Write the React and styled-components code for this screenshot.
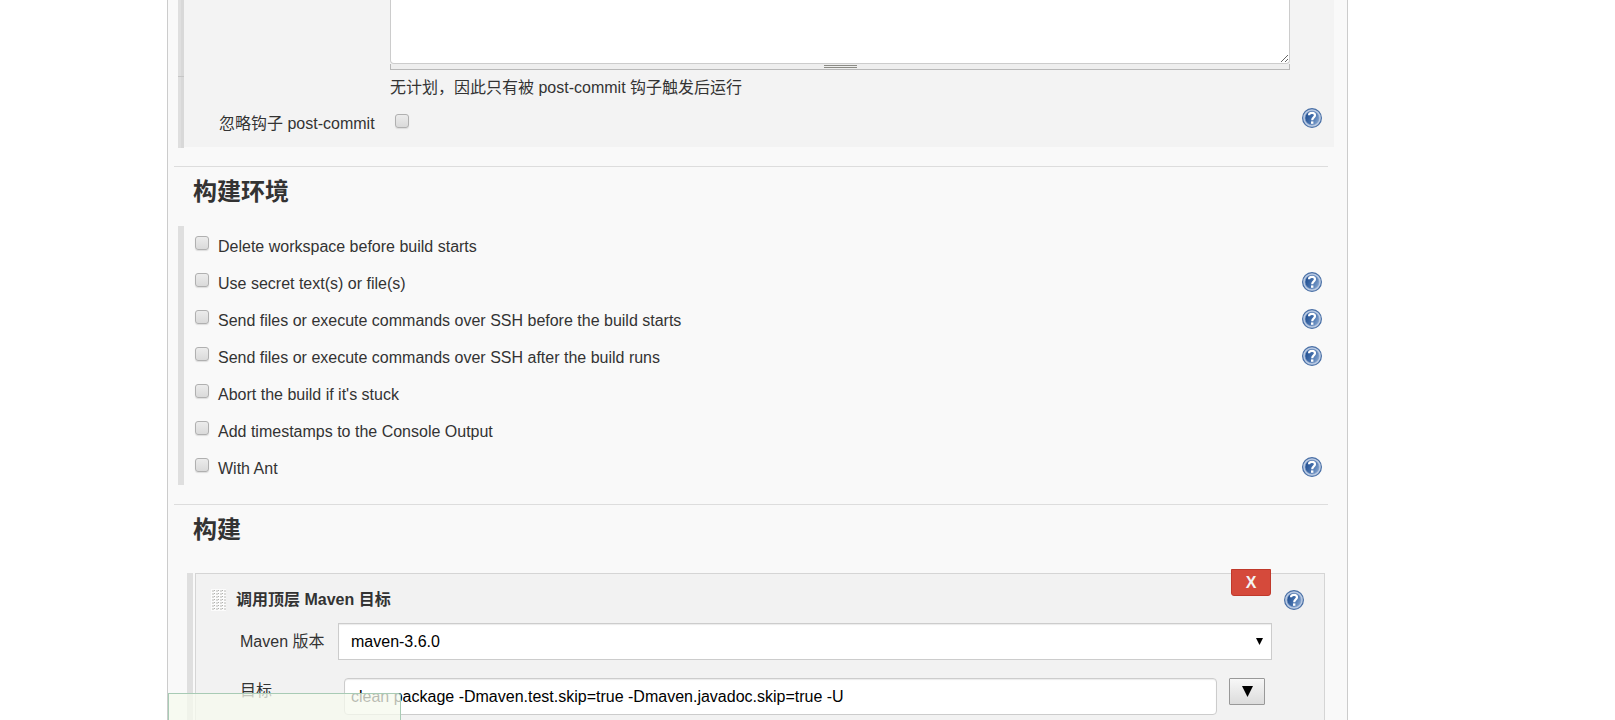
import React from "react";
import styled, { createGlobalStyle } from "styled-components";

const Global = createGlobalStyle`
  * { box-sizing: border-box; }
  body {
    margin: 0;
    background: #fff;
    color: #333;
    font: 16px/20px "Liberation Sans", "Noto Sans CJK SC", sans-serif;
  }
  input, select, textarea, button { font: inherit; margin: 0; }
`;

const Viewport = styled.div`
  height: 100vh;
  overflow: hidden;
`;

const Panel = styled.main`
  min-height: 100%;
  margin: 0 267px 0 167px;
  border: solid #ccc;
  border-width: 0 1px;
  background: #f9f9f9;
`;

const TriggerSection = styled.section`
  display: flex;
  margin: 0 13px 18px 10px;
`;

const NestedBar = styled.div`
  width: 6px;
  flex: none;
  display: flex;
  flex-direction: column;
  background: linear-gradient(to right, #dfdfdf 50%, #d8d8d8 50%);
`;

const BarSegment = styled.div`
  height: 76px;
  & + & {
    flex: 1;
    height: auto;
    border-top: 1px solid #c6c6c6;
  }
`;

const TriggerBody = styled.div`
  flex: 1;
  min-width: 0;
  margin-bottom: 1px;
  background: #f3f3f3;
`;

const Schedule = styled.div`
  margin: 0 44px 0 206px;
`;

const ScheduleText = styled.textarea`
  display: block;
  width: 100%;
  height: 64px;
  border: 1px solid #ccc;
  border-top: 0;
  border-radius: 0 0 4px 4px;
  background: #fff;
  resize: vertical;
  outline: none;
`;

const ResizeHandle = styled.div`
  height: 6px;
  display: flex;
  justify-content: center;
  border: solid #b8b8b8;
  border-width: 0 1px 1px;
  background: #eee;
  padding-top: 1px;
`;

const Grip = styled.span`
  width: 33px;
  height: 3px;
  border: solid #8b8b85;
  border-width: 1px 0;
`;

const Hint = styled.p`
  margin: 8px 0 0;
`;

const HookRow = styled.div`
  display: flex;
  height: 49px;
  padding: 10px 12px 0 35px;
`;

const HookLabel = styled.label`
  width: 176px;
  padding-top: 6px;
`;

const Checkbox = styled.input.attrs({ type: "checkbox" })`
  appearance: none;
  flex: none;
  width: 14px;
  height: 14px;
  border: 1px solid #b0b0b0;
  border-radius: 3px;
  background: linear-gradient(#ececec, #dadada);
  box-shadow: 0 1px 1px #ddd;
  ${HookRow} & { margin-top: 6px; }
`;

const HelpLink = styled.a`
  display: block;
  width: 20px;
  height: 20px;
  margin-left: auto;
  flex: none;
  svg { display: block; }
`;

const Divider = styled.hr`
  margin: 0 19px 0 6px;
  border: 0;
  border-top: 1px solid #ddd;
`;

const Heading = styled.h2`
  margin: 0;
  padding: 9px 0 0 25px;
  font-size: 24px;
  line-height: 32px;
  font-weight: bold;
`;

const OptionList = styled.ul`
  list-style: none;
  margin: 18px 13px 19px 10px;
  padding: 0;
  border-left: 6px solid #dfdfdf;
`;

const Option = styled.li`
  display: flex;
  height: 37px;
  padding: 9px 12px 0 11px;
`;

const OptionLabel = styled.label`
  display: flex;
  gap: 9px;
  input { margin-top: 1px; }
  span { padding-top: 1px; line-height: 22px; }
`;

const Builder = styled.section`
  margin: 27px 22px 0 19px;
  padding-left: 2px;
  border-left: 6px solid #dfdfdf;
`;

const Step = styled.div`
  position: relative;
  min-height: 200px;
  border: 1px solid #d5d5d5;
  background: #f2f2f2;
`;

const StepHeader = styled.header`
  display: flex;
  align-items: center;
  height: 49px;
  padding: 3px 20px 0 15px;
`;

const StepTitle = styled.h3`
  margin: 0 0 0 10px;
  font-size: 16px;
  line-height: 20px;
`;

const DeleteButton = styled.button`
  position: absolute;
  top: -5px;
  right: 53px;
  width: 40px;
  height: 27px;
  padding: 0;
  border: 1px solid #c0392b;
  border-radius: 0 0 3px 3px;
  background: #d54a3b;
  color: #f3f3f3;
  font-weight: bold;
`;

const Field = styled.div`
  display: flex;
  align-items: ${(p) => (p.$top ? "flex-start" : "center")};
  padding: 0 52px 0 44px;
  margin-bottom: 18px;
`;

const FieldLabel = styled.label`
  width: 98px;
  flex: none;
  line-height: 26px;
`;

const SelectWrap = styled.div`
  position: relative;
  flex: 1;
  svg { position: absolute; right: 9px; top: 15px; pointer-events: none; }
`;

const Select = styled.select`
  appearance: none;
  display: block;
  width: 100%;
  height: 37px;
  padding: 1px 12px 0;
  border: 1px solid #ccc;
  border-radius: 0;
  background: #fff;
  color: #000;
  box-shadow: inset 0 1px 1px rgba(0, 0, 0, 0.08);
`;

const TextInput = styled.input`
  flex: 1;
  min-width: 0;
  height: 37px;
  margin-left: 6px;
  padding: 0 6px;
  border: 1px solid #ccc;
  border-radius: 4px;
  background: #fff;
  color: #000;
  box-shadow: inset 0 1px 1px rgba(0, 0, 0, 0.08);
`;

const ExpandButton = styled.button`
  display: grid;
  place-items: center;
  width: 36px;
  height: 27px;
  margin: 0 7px 0 12px;
  padding: 0;
  border: 1px solid #999;
  border-radius: 1px;
  background: linear-gradient(#f7f7f7, #dcdcdc);
`;

const SaveBar = styled.div`
  position: sticky;
  bottom: 0;
  width: 233px;
  height: 27px;
  border: 1px solid #a8cbb5;
  border-bottom: 0;
  border-top-right-radius: 3px;
  background: rgba(245, 249, 238, 0.75);
`;

function Triangle({ width, height }) {
  return (
    <svg width={width} height={height} viewBox="0 0 10 10" preserveAspectRatio="none" aria-hidden="true">
      <path d="M0 0H10L5 10Z" fill="#000" />
    </svg>
  );
}

function Help() {
  return (
    <HelpLink href="#help" aria-label="Help">
      <svg width="20" height="20" viewBox="0 0 20 20" aria-hidden="true">
        <defs>
          <linearGradient id="help-fill" x1="0" y1="0.3" x2="1" y2="0.8">
            <stop offset="0" stopColor="#1f4d8f" />
            <stop offset="0.5" stopColor="#4570ac" />
            <stop offset="1" stopColor="#86a6d0" />
          </linearGradient>
        </defs>
        <circle cx="10" cy="10" r="9.4" fill="#bccce4" stroke="#4a70a6" strokeWidth="1.2" />
        <circle cx="10" cy="10" r="7" fill="url(#help-fill)" stroke="#7d9cc8" strokeWidth="0.6" />
        <path d="M7 7.2C7.2 4.2 13 4.2 13 7.3C13 9.5 10.2 9.2 10.2 12.2" fill="none" stroke="#fff" strokeWidth="2.2" />
        <rect x="9" y="13.4" width="2.4" height="2.4" fill="#fff" />
      </svg>
    </HelpLink>
  );
}

function DragHandle() {
  return (
    <svg width="15" height="22" aria-hidden="true">
      <defs>
        <pattern id="drag-dots" width="4" height="3" patternUnits="userSpaceOnUse">
          <rect width="4" height="3" fill="#fcfcfc" />
          <rect x="1" y="1" width="3" height="1" fill="#dcdcda" />
          <rect x="1" y="2" width="2" height="1" fill="#d8d8d6" />
          <rect x="3" y="1" width="1" height="1" fill="#b0b0ae" />
        </pattern>
      </defs>
      <rect width="15" height="22" fill="url(#drag-dots)" />
    </svg>
  );
}

const options = [
  { text: "Delete workspace before build starts" },
  { text: "Use secret text(s) or file(s)", help: true },
  { text: "Send files or execute commands over SSH before the build starts", help: true },
  { text: "Send files or execute commands over SSH after the build runs", help: true },
  { text: "Abort the build if it's stuck" },
  { text: "Add timestamps to the Console Output" },
  { text: "With Ant", help: true },
];

export default function App() {
  return (
    <Viewport>
      <Global />
      <Panel>
        <TriggerSection>
          <NestedBar>
            <BarSegment />
            <BarSegment />
          </NestedBar>
          <TriggerBody>
            <Schedule>
              <ScheduleText aria-label="Schedule" />
              <ResizeHandle>
                <Grip />
              </ResizeHandle>
              <Hint>无计划，因此只有被 post-commit 钩子触发后运行</Hint>
            </Schedule>
            <HookRow>
              <HookLabel htmlFor="ignore-hook">忽略钩子 post-commit</HookLabel>
              <Checkbox id="ignore-hook" />
              <Help />
            </HookRow>
          </TriggerBody>
        </TriggerSection>

        <Divider />
        <Heading>构建环境</Heading>
        <OptionList>
          {options.map((o) => (
            <Option key={o.text}>
              <OptionLabel>
                <Checkbox />
                <span>{o.text}</span>
              </OptionLabel>
              {o.help && <Help />}
            </Option>
          ))}
        </OptionList>

        <Divider />
        <Heading>构建</Heading>
        <Builder>
          <Step>
            <StepHeader>
              <DragHandle />
              <StepTitle>调用顶层 Maven 目标</StepTitle>
              <Help />
            </StepHeader>
            <DeleteButton type="button">X</DeleteButton>
            <Field>
              <FieldLabel htmlFor="maven-version">Maven 版本</FieldLabel>
              <SelectWrap>
                <Select id="maven-version" defaultValue="maven-3.6.0">
                  <option>maven-3.6.0</option>
                </Select>
                <Triangle width={7} height={7} />
              </SelectWrap>
            </Field>
            <Field $top>
              <FieldLabel htmlFor="targets">目标</FieldLabel>
              <TextInput
                id="targets"
                type="text"
                defaultValue="clean package -Dmaven.test.skip=true -Dmaven.javadoc.skip=true -U"
              />
              <ExpandButton type="button" aria-label="Expand">
                <Triangle width={11} height={11} />
              </ExpandButton>
            </Field>
          </Step>
        </Builder>
        <SaveBar />
      </Panel>
    </Viewport>
  );
}
